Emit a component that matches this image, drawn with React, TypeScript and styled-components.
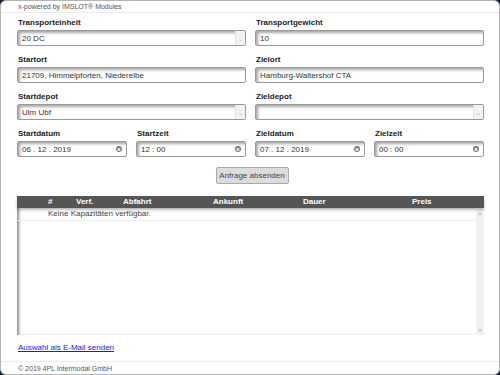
import React from 'react';
import styled, { createGlobalStyle } from 'styled-components';

const GlobalStyle = createGlobalStyle`
  html, body {
    margin: 0;
    padding: 0;
    background: #17233b;
  }
  body {
    font-family: 'Liberation Sans', Arial, sans-serif;
  }
`;

const Window = styled.div`
  box-sizing: border-box;
  width: 500px;
  height: 375px;
  background: #fff;
  border: 1px solid #b4b4b4;
  border-radius: 6px;
  display: flex;
  flex-direction: column;
  overflow: hidden;
`;

const TopBar = styled.div`
  height: 11px;
  border-bottom: 1px solid #ececec;
  padding-left: 17px;
  font-size: 7px;
  line-height: 11px;
  color: #555;
`;

const Main = styled.div`
  flex: 1;
  padding: 5px 15px 0 16px;
  display: flex;
  flex-direction: column;
`;

const Grid = styled.div<{ cols: number }>`
  display: grid;
  grid-template-columns: repeat(${(p) => p.cols}, 1fr);
  column-gap: 9px;
  margin-bottom: 9px;
`;

const Field = styled.div`
  display: flex;
  flex-direction: column;
`;

const Label = styled.label`
  font-size: 8px;
  font-weight: bold;
  color: #222;
  line-height: 10px;
  margin-bottom: 2px;
  padding-left: 1px;
`;

const Box = styled.div`
  box-sizing: border-box;
  height: 16px;
  border: 1px solid #999;
  border-radius: 2px;
  background: #fff;
  box-shadow: inset 2px 2px 3px rgba(0, 0, 0, 0.35);
  display: flex;
  align-items: center;
  font-size: 8px;
  color: #333;
  padding-left: 4px;
  overflow: hidden;
`;

const BoxText = styled.span`
  flex: 1;
  white-space: nowrap;
`;

const Arrow = styled.span`
  width: 9px;
  height: 100%;
  background: #f2f2f2;
  border-left: 1px solid #e2e2e2;
  color: #aaa;
  font-size: 6px;
  display: flex;
  align-items: center;
  justify-content: center;
`;

const Clear = styled.span`
  width: 6px;
  height: 6px;
  border-radius: 50%;
  background: #777;
  margin-right: 4px;
  position: relative;
  &::before,
  &::after {
    content: '';
    position: absolute;
    left: 1px;
    top: 2.5px;
    width: 4px;
    height: 1px;
    background: #fff;
    transform: rotate(45deg);
  }
  &::after {
    transform: rotate(-45deg);
  }
`;

const ButtonRow = styled.div`
  display: flex;
  justify-content: center;
  margin-top: 1px;
  margin-left: 3px;
`;

const Button = styled.button`
  box-sizing: border-box;
  height: 17px;
  width: 73px;
  padding: 0;
  background: #dcdcdc;
  border: 1px solid #aaa;
  border-radius: 2px;
  font-family: 'Liberation Sans', Arial, sans-serif;
  font-size: 8px;
  color: #444;
`;

const Table = styled.div`
  margin-top: 12px;
  height: 139px;
  display: flex;
  flex-direction: column;
`;

const Head = styled.div`
  height: 12px;
  background: #555;
  box-shadow: 0 2px 3px rgba(0, 0, 0, 0.25);
  display: grid;
  grid-template-columns: 31px 28px 47px 90px 90px 109px 1fr;
  font-size: 8px;
  font-weight: bold;
  color: #fff;
  line-height: 12px;
  position: relative;
  z-index: 1;
`;

const Body = styled.div`
  flex: 1;
  display: flex;
  box-shadow: inset 3px 0 3px -1px rgba(0, 0, 0, 0.45);
`;

const Rows = styled.div`
  flex: 1;
`;

const Row = styled.div`
  height: 12px;
  border-bottom: 1px solid #eee;
  display: grid;
  grid-template-columns: 31px 1fr;
  font-size: 8px;
  color: #444;
  line-height: 12px;
`;

const Scroll = styled.div`
  width: 8px;
  background: #f1f1f1;
  display: flex;
  flex-direction: column;
  justify-content: space-between;
  align-items: center;
  font-size: 5px;
  color: #bbb;
  padding: 2px 0;
`;

const MailLink = styled.a`
  margin-top: 8px;
  font-size: 8px;
  color: #1a1aee;
  text-decoration: underline;
  padding-left: 1px;
`;

const Footer = styled.div`
  height: 12px;
  border-top: 1px solid #ececec;
  padding-left: 17px;
  font-size: 7px;
  line-height: 13px;
  color: #555;
`;

const Select = ({ value }: { value: string }) => (
  <Box style={{ paddingRight: 0 }}>
    <BoxText>{value}</BoxText>
    <Arrow>⌄</Arrow>
  </Box>
);

const ClearInput = ({ value }: { value: string }) => (
  <Box>
    <BoxText>{value}</BoxText>
    <Clear />
  </Box>
);

const App = () => (
  <>
    <GlobalStyle />
    <Window>
      <TopBar>x-powered by IMSLOT® Modules</TopBar>
      <Main>
        <Grid cols={2}>
          <Field>
            <Label>Transporteinheit</Label>
            <Select value="20 DC" />
          </Field>
          <Field>
            <Label>Transportgewicht</Label>
            <Box>10</Box>
          </Field>
        </Grid>
        <Grid cols={2}>
          <Field>
            <Label>Startort</Label>
            <Box>21709, Himmelpforten, Niederelbe</Box>
          </Field>
          <Field>
            <Label>Zielort</Label>
            <Box>Hamburg-Waltershof CTA</Box>
          </Field>
        </Grid>
        <Grid cols={2}>
          <Field>
            <Label>Startdepot</Label>
            <Select value="Ulm Ubf" />
          </Field>
          <Field>
            <Label>Zieldepot</Label>
            <Select value="" />
          </Field>
        </Grid>
        <Grid cols={4}>
          <Field>
            <Label>Startdatum</Label>
            <ClearInput value="06 . 12 . 2019" />
          </Field>
          <Field>
            <Label>Startzeit</Label>
            <ClearInput value="12 : 00" />
          </Field>
          <Field>
            <Label>Zieldatum</Label>
            <ClearInput value="07 . 12 . 2019" />
          </Field>
          <Field>
            <Label>Zielzeit</Label>
            <ClearInput value="00 : 00" />
          </Field>
        </Grid>
        <ButtonRow>
          <Button>Anfrage absenden</Button>
        </ButtonRow>
        <Table>
          <Head>
            <span />
            <span>#</span>
            <span>Verf.</span>
            <span>Abfahrt</span>
            <span>Ankunft</span>
            <span>Dauer</span>
            <span>Preis</span>
          </Head>
          <Body>
            <Rows>
              <Row>
                <span />
                <span>Keine Kapazitäten verfügbar.</span>
              </Row>
            </Rows>
            <Scroll>
              <span>▲</span>
              <span>▼</span>
            </Scroll>
          </Body>
        </Table>
        <MailLink href="#">Auswahl als E-Mail senden</MailLink>
      </Main>
      <Footer>© 2019 4PL Intermodal GmbH</Footer>
    </Window>
  </>
);

export default App;
